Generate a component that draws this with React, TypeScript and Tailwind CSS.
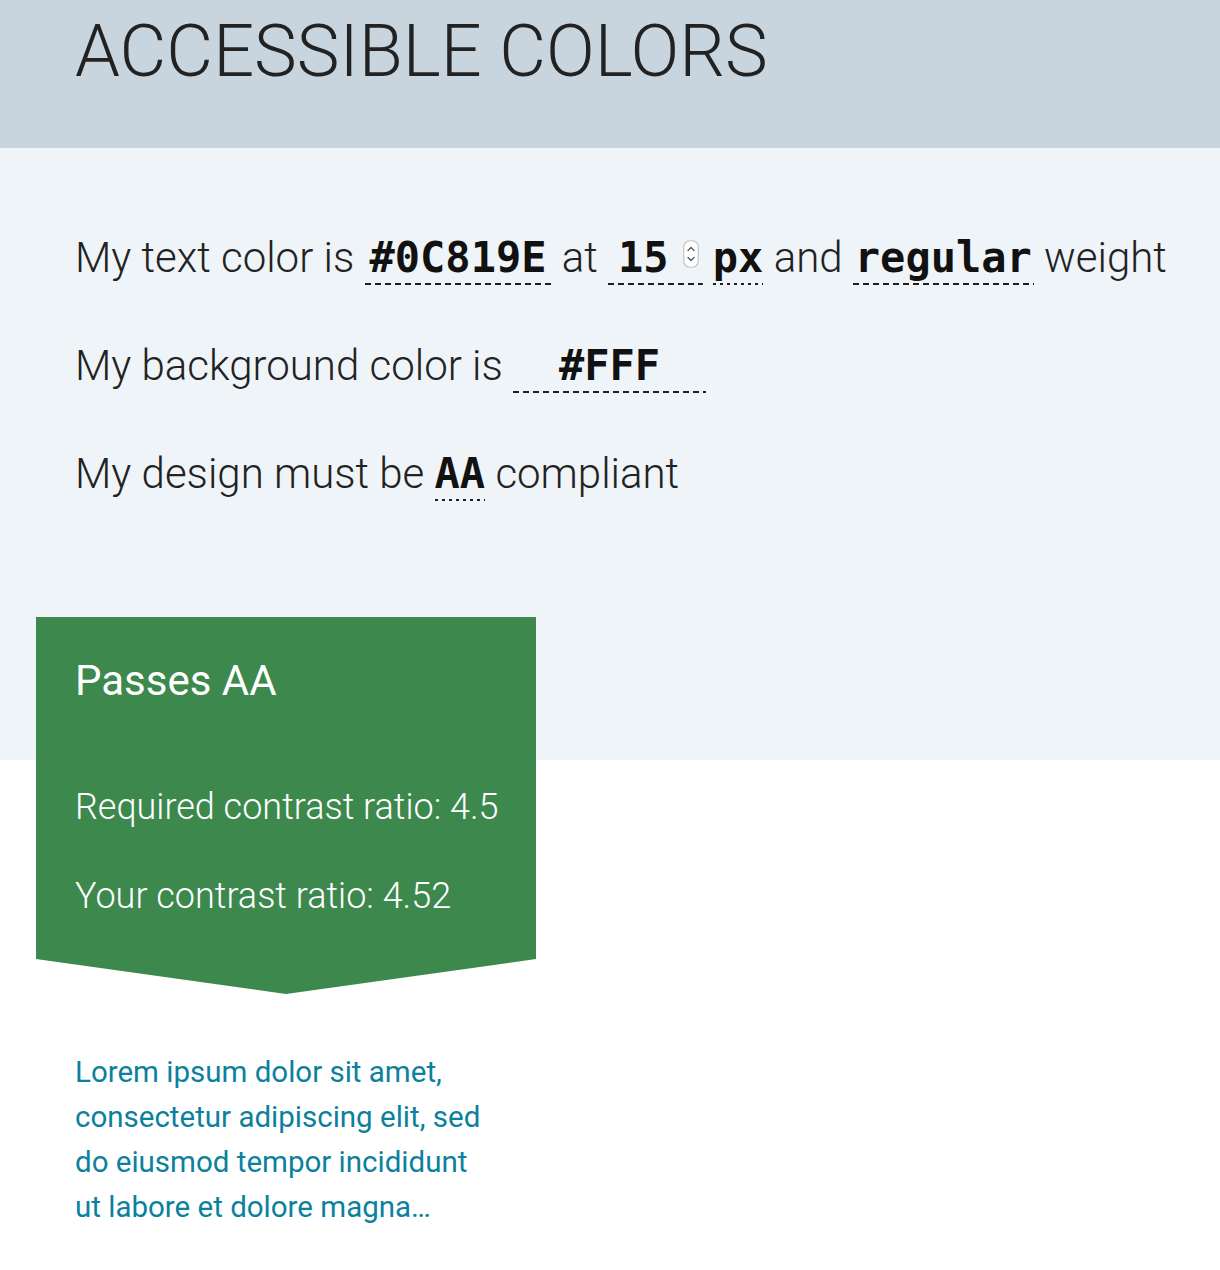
import React from "react";

const dash =
  "bg-[image:repeating-linear-gradient(90deg,#1f1f1f_0px,#1f1f1f_6px,transparent_6px,transparent_10px)] bg-[length:100%_2px] bg-bottom bg-no-repeat";
const dot =
  "bg-[image:repeating-linear-gradient(90deg,#1f1f1f_0px,#1f1f1f_3px,transparent_3px,transparent_7px)] bg-[length:100%_2px] bg-bottom bg-no-repeat";
const mono = "font-['DejaVu_Sans_Mono',monospace] font-bold text-[42px] text-[#111]";

function Spinner() {
  return (
    <svg width="16" height="28" viewBox="0 0 16 28" className="inline-block align-[4px] ml-[14px] mr-[4px]">
      <rect x="0.75" y="0.75" width="14.5" height="26.5" rx="6" fill="#fff" stroke="#c4c4c4" strokeWidth="1.2" />
      <path d="M5 10.5 L8 7.5 L11 10.5" fill="none" stroke="#555" strokeWidth="1.3" strokeLinecap="round" strokeLinejoin="round" />
      <path d="M5 17.5 L8 20.5 L11 17.5" fill="none" stroke="#555" strokeWidth="1.3" strokeLinecap="round" strokeLinejoin="round" />
    </svg>
  );
}

export default function App() {
  return (
    <div className="w-[1220px] min-h-[1270px] bg-white font-['Roboto','Liberation_Sans',sans-serif] text-[#222]">
      <header className="h-[148px] bg-[#C8D5DE] pt-[16px] pl-[75px]">
        <h1 className="text-[72px] leading-none font-light text-[#222]">ACCESSIBLE COLORS</h1>
      </header>

      <section className="flow-root bg-[#EFF4F8] pt-[56px] pl-[36px]">
        <div className="pl-[39px] text-[42px] font-light leading-[108px] whitespace-nowrap">
          <p>
            My text color is{" "}
            <span className={`${mono} ${dash} px-[5px] pb-[3px]`}>#0C819E</span> at{" "}
            <span className={`${mono} ${dash} pl-[10px] pb-[3px]`}>
              15
              <Spinner />
            </span>{" "}
            <span className={`${mono} ${dot} pb-[3px]`}>px</span> and{" "}
            <span className={`${mono} ${dash} px-[2px] pb-[3px]`}>regular</span> weight
          </p>
          <p>
            My background color is{" "}
            <span className={`${mono} ${dash} inline-block w-[193px] text-center leading-[48px] pb-[3px] align-baseline`}>#FFF</span>
          </p>
          <p>
            My design must be <span className={`${mono} ${dot} pb-[3px]`}>AA</span> compliant
          </p>
        </div>

        <div className="relative z-10 mt-[89px] mb-[-234px] w-[500px] bg-[#3C884D] pl-[39px] pt-[43px] pb-[80px] text-white [clip-path:polygon(0_0,100%_0,100%_calc(100%_-_35px),50%_100%,0_calc(100%_-_35px))]">
          <h2 className="text-[42px] leading-none font-normal">Passes AA</h2>
          <p className="mt-[87px] text-[36px] leading-none font-light">Required contrast ratio: 4.5</p>
          <p className="mt-[53px] text-[36px] leading-none font-light">Your contrast ratio: 4.52</p>
        </div>
      </section>

      <section className="pl-[75px] pt-[290px] pb-[40px]">
        <p className="w-[418px] text-[29.5px] leading-[45px] font-normal text-[#0C819E]">
          Lorem ipsum dolor sit amet, consectetur adipiscing elit, sed do eiusmod tempor incididunt ut labore et dolore magna…
        </p>
      </section>
    </div>
  );
}
